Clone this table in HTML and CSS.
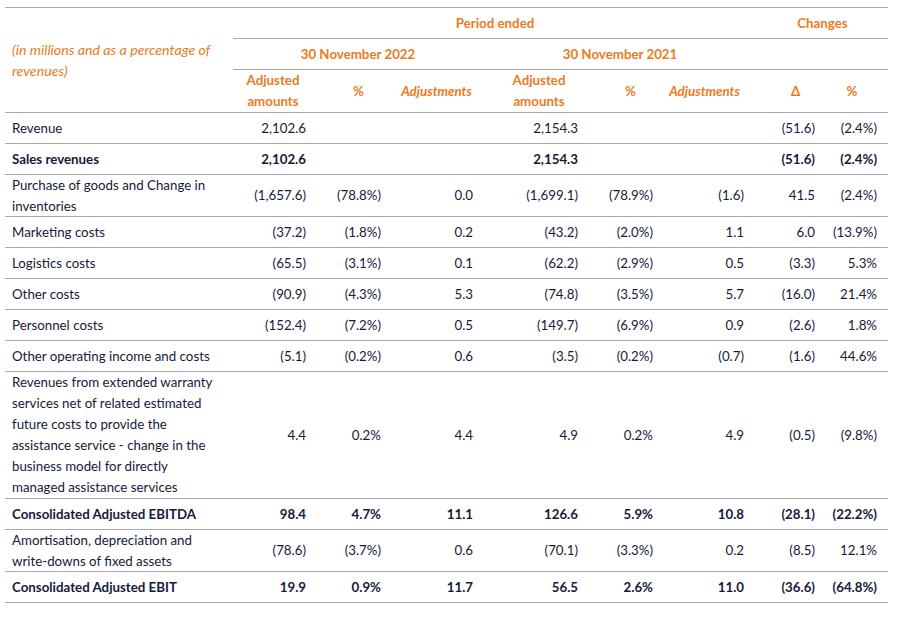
FILE: index.html
```html
<!DOCTYPE html>
<html lang="en">
<head>
<meta charset="utf-8">
<title>Adjusted EBITDA table</title>
<link rel="stylesheet" href="styles.css">
</head>
<body>
<div class="wrap">
<table class="fin">
  <colgroup>
    <col class="w-label"><col class="w-c1"><col class="w-c2"><col class="w-c3"><col class="w-c4"><col class="w-c5"><col class="w-c6"><col class="w-c7"><col class="w-c8">
  </colgroup>
  <thead>
    <tr class="h1">
      <th class="unit" rowspan="3">(in millions and as a percentage of<br>revenues)</th>
      <th colspan="6" class="grp">Period ended</th>
      <th colspan="2" class="grp">Changes</th>
    </tr>
    <tr class="h2">
      <th colspan="3" class="grp">30 November 2022</th>
      <th colspan="3" class="grp">30 November 2021</th>
      <th colspan="2" class="grp"></th>
    </tr>
    <tr class="h3">
      <th class="hc1">Adjusted<br>amounts</th>
      <th class="hc2">%</th>
      <th class="hc3 it">Adjustments</th>
      <th class="hc4">Adjusted<br>amounts</th>
      <th class="hc5">%</th>
      <th class="hc6 it">Adjustments</th>
      <th class="hc7">Δ</th>
      <th class="hc8">%</th>
    </tr>
  </thead>
  <tbody>
    <tr><td class="lbl">Revenue</td><td class="c1">2,102.6</td><td class="c2"></td><td class="c3"></td><td class="c4">2,154.3</td><td class="c5"></td><td class="c6"></td><td class="c7">(51.6)</td><td class="c8">(2.4%)</td></tr>
    <tr class="bold"><td class="lbl">Sales revenues</td><td class="c1">2,102.6</td><td class="c2"></td><td class="c3"></td><td class="c4">2,154.3</td><td class="c5"></td><td class="c6"></td><td class="c7">(51.6)</td><td class="c8">(2.4%)</td></tr>
    <tr class="two"><td class="lbl">Purchase of goods and Change in<br>inventories</td><td class="c1">(1,657.6)</td><td class="c2">(78.8%)</td><td class="c3">0.0</td><td class="c4">(1,699.1)</td><td class="c5">(78.9%)</td><td class="c6">(1.6)</td><td class="c7">41.5</td><td class="c8">(2.4%)</td></tr>
    <tr><td class="lbl">Marketing costs</td><td class="c1">(37.2)</td><td class="c2">(1.8%)</td><td class="c3">0.2</td><td class="c4">(43.2)</td><td class="c5">(2.0%)</td><td class="c6">1.1</td><td class="c7">6.0</td><td class="c8">(13.9%)</td></tr>
    <tr><td class="lbl">Logistics costs</td><td class="c1">(65.5)</td><td class="c2">(3.1%)</td><td class="c3">0.1</td><td class="c4">(62.2)</td><td class="c5">(2.9%)</td><td class="c6">0.5</td><td class="c7">(3.3)</td><td class="c8">5.3%</td></tr>
    <tr><td class="lbl">Other costs</td><td class="c1">(90.9)</td><td class="c2">(4.3%)</td><td class="c3">5.3</td><td class="c4">(74.8)</td><td class="c5">(3.5%)</td><td class="c6">5.7</td><td class="c7">(16.0)</td><td class="c8">21.4%</td></tr>
    <tr><td class="lbl">Personnel costs</td><td class="c1">(152.4)</td><td class="c2">(7.2%)</td><td class="c3">0.5</td><td class="c4">(149.7)</td><td class="c5">(6.9%)</td><td class="c6">0.9</td><td class="c7">(2.6)</td><td class="c8">1.8%</td></tr>
    <tr><td class="lbl">Other operating income and costs</td><td class="c1">(5.1)</td><td class="c2">(0.2%)</td><td class="c3">0.6</td><td class="c4">(3.5)</td><td class="c5">(0.2%)</td><td class="c6">(0.7)</td><td class="c7">(1.6)</td><td class="c8">44.6%</td></tr>
    <tr><td class="lbl">Revenues from extended warranty<br>services net of related estimated<br>future costs to provide the<br>assistance service - change in the<br>business model for directly<br>managed assistance services</td><td class="c1">4.4</td><td class="c2">0.2%</td><td class="c3">4.4</td><td class="c4">4.9</td><td class="c5">0.2%</td><td class="c6">4.9</td><td class="c7">(0.5)</td><td class="c8">(9.8%)</td></tr>
    <tr class="bold"><td class="lbl">Consolidated Adjusted EBITDA</td><td class="c1">98.4</td><td class="c2">4.7%</td><td class="c3">11.1</td><td class="c4">126.6</td><td class="c5">5.9%</td><td class="c6">10.8</td><td class="c7">(28.1)</td><td class="c8">(22.2%)</td></tr>
    <tr class="two"><td class="lbl">Amortisation, depreciation and<br>write-downs of fixed assets</td><td class="c1">(78.6)</td><td class="c2">(3.7%)</td><td class="c3">0.6</td><td class="c4">(70.1)</td><td class="c5">(3.3%)</td><td class="c6">0.2</td><td class="c7">(8.5)</td><td class="c8">12.1%</td></tr>
    <tr class="bold"><td class="lbl">Consolidated Adjusted EBIT</td><td class="c1">19.9</td><td class="c2">0.9%</td><td class="c3">11.7</td><td class="c4">56.5</td><td class="c5">2.6%</td><td class="c6">11.0</td><td class="c7">(36.6)</td><td class="c8">(64.8%)</td></tr>
  </tbody>
</table>
</div>
</body>
</html>
```
FILE: styles.css
```css
html, body {
  margin: 0;
  padding: 0;
  background: #ffffff;
}
.wrap {
  padding: 7px 0 0 5px;
}
.fin {
  border-collapse: collapse;
  table-layout: fixed;
  width: 883px;
  font-family: Lato, "Open Sans", sans-serif;
  font-size: 13.3px;
  line-height: 21px;
  color: #161a38;
}
.w-label { width: 228px; }
.w-c1 { width: 80px; }
.w-c2 { width: 77px; }
.w-c3 { width: 93px; }
.w-c4 { width: 104px; }
.w-c5 { width: 75px; }
.w-c6 { width: 95px; }
.w-c7 { width: 63px; }
.w-c8 { width: 68px; }

.fin th, .fin td {
  padding: 0;
  height: 30px;
  vertical-align: middle;
  border-bottom: 1px solid #a9a9b4;
  white-space: nowrap;
}
.fin thead tr.h1 th {
  border-top: 1px solid #a9a9b4;
}
.fin th {
  color: #ec7a1c;
  font-weight: 700;
  text-align: center;
}
.fin th.unit {
  text-align: left;
  font-weight: 400;
  font-style: italic;
  font-size: 14.2px;
  padding-left: 7px;
}
.fin th.it {
  font-style: italic;
}
.h3 th {
  height: 40px;
}
.hc1 { padding-left: 0; }
.hc2 { padding-left: 14px !important; }
.hc3 { padding-left: 0; }
.hc4 { padding-left: 8px !important; }
.hc5 { padding-left: 12px !important; }
.hc6 { padding-right: 10px !important; }
.hc7 { padding-left: 14px !important; }
.hc8 { padding-right: 4px !important; }

.fin td { text-align: right; }
.fin td.lbl {
  text-align: left;
  padding-left: 7px;
}
.fin tr.two td {
  height: 41px;
  line-height: 20.5px;
}
.c1 { padding-right: 7px !important; }
.c2 { padding-right: 9px !important; }
.c3 { padding-right: 10px !important; }
.c4 { padding-right: 9px !important; }
.c5 { padding-right: 9px !important; }
.c6 { padding-right: 13px !important; }
.c7 { padding-right: 5px !important; }
.c8 { padding-right: 11px !important; }

tr.bold td { font-weight: 700; }
```
